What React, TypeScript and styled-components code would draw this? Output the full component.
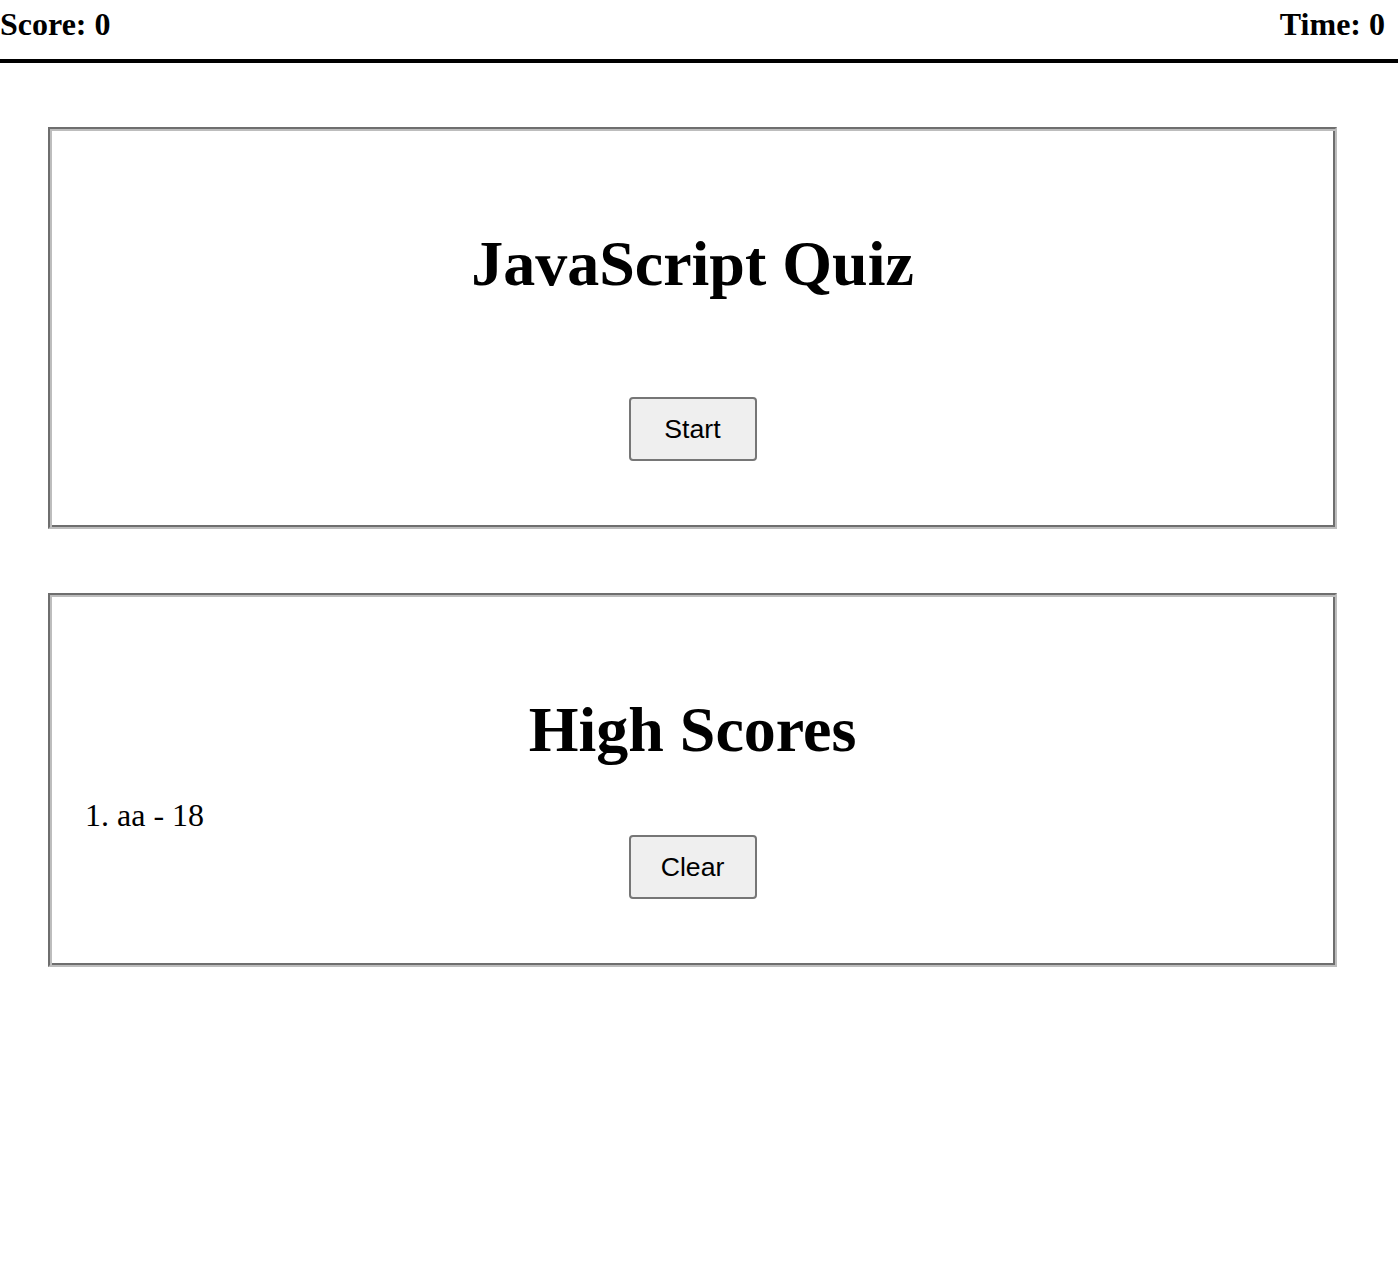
import { createGlobalStyle } from 'styled-components'
import styled from 'styled-components'

const GlobalStyle = createGlobalStyle`
  body {
    margin: 0;
    background: #fff;
    color: #000;
    font-family: 'Liberation Serif', 'Times New Roman', serif;
  }
`

const scores = [{ name: 'aa', score: 18 }]

export default function App() {
  return (
    <>
      <GlobalStyle />
      <Header>
        <Stat>Score: 0</Stat>
        <Stat>Time: 0</Stat>
      </Header>
      <Main>
        <Card $top={97}>
          <Title>JavaScript Quiz</Title>
          <Action $gap={98}>Start</Action>
        </Card>
        <Card $top={97}>
          <Title>High Scores</Title>
          <ScoreList>
            {scores.map((s, i) => (
              <ScoreItem key={i}>
                {i + 1}. {s.name} - {s.score}
              </ScoreItem>
            ))}
          </ScoreList>
          <Action $gap={2}>Clear</Action>
        </Card>
      </Main>
    </>
  )
}

const Header = styled.header`
  display: flex;
  justify-content: space-between;
  align-items: flex-start;
  height: 53px;
  padding: 6px 13px 0 0;
  border-bottom: 4px solid #000;
`

const Stat = styled.div`
  font-size: 32px;
  font-weight: bold;
  line-height: 36px;
`

const Main = styled.main`
  display: flex;
  flex-direction: column;
  gap: 64px;
  margin: 64px 61px 0 48px;
`

/* groove border, drawn by hand so both tones show */
const Card = styled.section<{ $top: number }>`
  display: flex;
  flex-direction: column;
  align-items: center;
  border: 2px solid;
  border-color: #6e6e6e #bdbdbd #bdbdbd #6e6e6e;
  box-shadow: inset 2px 2px 0 #bdbdbd, inset -2px -2px 0 #6e6e6e;
  padding: ${(props) => props.$top + 2}px 2px 66px;
`

const Title = styled.h1`
  margin: 0;
  font-size: 64px;
  font-weight: bold;
  line-height: 71px;
  text-align: center;
`

const ScoreList = styled.div`
  align-self: stretch;
  margin-top: 32px;
  padding-left: 33px;
`

const ScoreItem = styled.div`
  font-size: 32px;
  line-height: 36px;
`

const Action = styled.button<{ $gap: number }>`
  margin-top: ${(props) => props.$gap}px;
  width: 128px;
  height: 64px;
  padding: 0;
  font-family: 'Liberation Sans', Arial, sans-serif;
  font-size: 26.67px;
  color: #000;
  background: #efefef;
  border: 2px solid #767676;
  border-radius: 4px;
  cursor: pointer;
`
